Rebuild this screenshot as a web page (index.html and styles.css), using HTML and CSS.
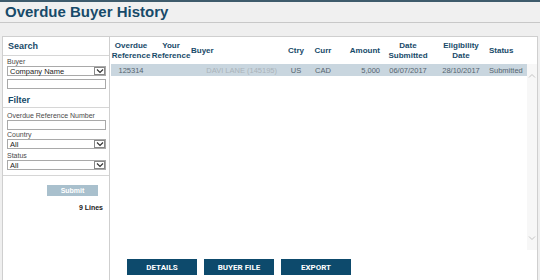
FILE: index.html
```html
<!DOCTYPE html>
<html>
<head>
<meta charset="utf-8">
<link rel="stylesheet" href="styles.css">
</head>
<body>
<div class="page">
  <header class="topbar"><h1 class="title">Overdue Buyer History</h1></header>
  <div class="content">
    <aside class="side">
      <div class="side-head search-head">Search</div>
      <div class="side-sec">
        <span class="lbl">Buyer</span>
        <div class="sel"><span>Company Name</span><span class="dd"><svg width="8" height="6" viewBox="0 0 8 6"><path d="M1 1.5 L4 4.5 L7 1.5" fill="none" stroke="#333" stroke-width="1.2"/></svg></span></div>
        <div class="inp"></div>
      </div>
      <div class="side-head filter-head">Filter</div>
      <div class="side-sec filter-sec">
        <span class="lbl">Overdue Reference Number</span>
        <div class="inp"></div>
        <span class="lbl">Country</span>
        <div class="sel"><span>All</span><span class="dd"><svg width="8" height="6" viewBox="0 0 8 6"><path d="M1 1.5 L4 4.5 L7 1.5" fill="none" stroke="#333" stroke-width="1.2"/></svg></span></div>
        <span class="lbl">Status</span>
        <div class="sel"><span>All</span><span class="dd"><svg width="8" height="6" viewBox="0 0 8 6"><path d="M1 1.5 L4 4.5 L7 1.5" fill="none" stroke="#333" stroke-width="1.2"/></svg></span></div>
      </div>
      <div class="side-foot">
        <button class="submit">Submit</button>
        <div class="lines">9 Lines</div>
      </div>
    </aside>
    <main class="main">
      <div class="grid">
        <div class="thead">
          <div class="c c1">Overdue<br>Reference</div>
          <div class="c c2">Your<br>Reference</div>
          <div class="c c3 left">Buyer</div>
          <div class="c c4">Ctry</div>
          <div class="c c5">Curr</div>
          <div class="c c6 right">Amount</div>
          <div class="c c7">Date<br>Submitted</div>
          <div class="c c8">Eligibility<br>Date</div>
          <div class="c c9 left">Status</div>
        </div>
        <div class="tbody">
          <div class="rows">
            <div class="row sel-row">
              <div class="c c1">125314</div>
              <div class="c c2"></div>
              <div class="c c3 right buyer">DAVI LANE (145195)</div>
              <div class="c c4">US</div>
              <div class="c c5">CAD</div>
              <div class="c c6 right">5,000</div>
              <div class="c c7">06/07/2017</div>
              <div class="c c8">28/10/2017</div>
              <div class="c c9 left">Submitted</div>
            </div>
          </div>
          <div class="scroll">
            <svg width="8" height="6" viewBox="0 0 8 6"><path d="M1 4.5 L4 1.5 L7 4.5" fill="none" stroke="#c4c4c4" stroke-width="1"/></svg>
            <svg width="8" height="6" viewBox="0 0 8 6"><path d="M1 1.5 L4 4.5 L7 1.5" fill="none" stroke="#c4c4c4" stroke-width="1"/></svg>
          </div>
        </div>
      </div>
      <div class="actions">
        <button class="btn">DETAILS</button>
        <button class="btn">BUYER FILE</button>
        <button class="btn">EXPORT</button>
      </div>
    </main>
  </div>
</div>
</body>
</html>
```
FILE: styles.css
```css
* { box-sizing: border-box; }
html, body { margin: 0; padding: 0; }
body {
  width: 540px; height: 280px; overflow: hidden;
  background: #efefef;
  font-family: "Liberation Sans", Arial, sans-serif;
  color: #333;
}
.page { display: flex; flex-direction: column; height: 280px; }
.topbar {
  border-top: 2px solid #3e5b6c;
  border-bottom: 1px solid #c8c8c8;
  height: 23px;
  padding: 0 5px;
  background: #f0f0f0;
}
.title {
  margin: 0; font-size: 15px; font-weight: bold; color: #174a69;
  line-height: 20px;
}
.content {
  flex: 1; display: flex; padding: 13px 2px 0 2px;
}
.side {
  width: 108px; background: #fff; border: 1px solid #cfcfcf; border-bottom: none;
  display: flex; flex-direction: column;
}
.side-head {
  font-size: 9px; line-height: 10px; font-weight: bold; color: #174a69;
  padding: 4px 5px 0;
  border-bottom: 1px solid #d6d6d6;
}
.search-head { height: 19px; }
.filter-head { height: 16px; padding-top: 3px; }
.side-sec { padding: 1px 3px 3px 4px; display: flex; flex-direction: column; }
.filter-sec { padding-top: 3px; padding-bottom: 5px; }
.lbl { font-size: 7px; color: #4a4a4a; line-height: 9px; }
.filter-sec .lbl + .sel, .filter-sec .lbl + .inp { margin-top: 0; }
.filter-sec .sel + .lbl { margin-top: 2px; }
.sel, .inp {
  height: 10px; border: 1px solid #a9a9a9; background: #fff;
  font-size: 7.5px; color: #222; display: flex; align-items: center; justify-content: space-between;
  padding-left: 2px;
}
.side-sec > .sel + .inp { margin-top: 3px; }
.dd {
  width: 11px; height: 8px; border: 1px solid #888; display: flex; align-items: center; justify-content: center;
}
.side-foot {
  border-top: 1px solid #d6d6d6;
  display: flex; flex-direction: column; align-items: flex-end; padding: 9px 6px 0 0;
}
.submit {
  width: 51px; height: 11px; border: none; background: #a9c0cd; color: #fff;
  font-family: inherit; font-size: 7px; font-weight: bold; padding: 0; margin-right: 5px;
}
.lines { font-size: 7px; font-weight: bold; color: #222; margin-top: 8px; }
.main {
  flex: 1; background: #fff; border: 1px solid #cfcfcf; border-left: none; border-bottom: none;
  display: flex; flex-direction: column;
}
.grid { flex: 1; display: flex; flex-direction: column; padding: 0 0 0 1px; }
.thead { display: flex; height: 27px; align-items: center; font-weight: bold; color: #174a69; font-size: 8px; line-height: 10px; padding-top: 1px; }
.c { text-align: center; white-space: nowrap; }
.left { text-align: left; }
.right { text-align: right; }
.c1 { width: 40px; }
.c2 { width: 40px; }
.c3 { width: 90px; }
.c4 { width: 30px; }
.c5 { width: 24px; }
.c6 { width: 48px; padding-right: 3px; }
.c7 { width: 50px; }
.c8 { width: 56px; }
.c9 { width: 38px; }
.tbody { flex: 1; display: flex; }
.rows { width: 416px; }
.row { display: flex; height: 12px; align-items: center; font-size: 7.5px; color: #56656f; }
.sel-row { background: #c9d6df; }
.row .c3 { padding-right: 4px; }
.buyer { color: #a9b3ba; }
.scroll {
  width: 10px; background: #f7f7f7; display: flex; flex-direction: column; justify-content: space-between;
  align-items: center; padding: 9px 0 9px; margin-bottom: 6px;
}
.actions { display: flex; gap: 7px; padding: 0 0 5px 17px; height: 24px; align-items: flex-end; }
.btn {
  width: 70px; height: 16px; border: none; background: #0d4a6c; color: #fff;
  font-family: "Roboto", "Liberation Sans", sans-serif; font-size: 8px; font-weight: bold; padding: 0;
}
```
